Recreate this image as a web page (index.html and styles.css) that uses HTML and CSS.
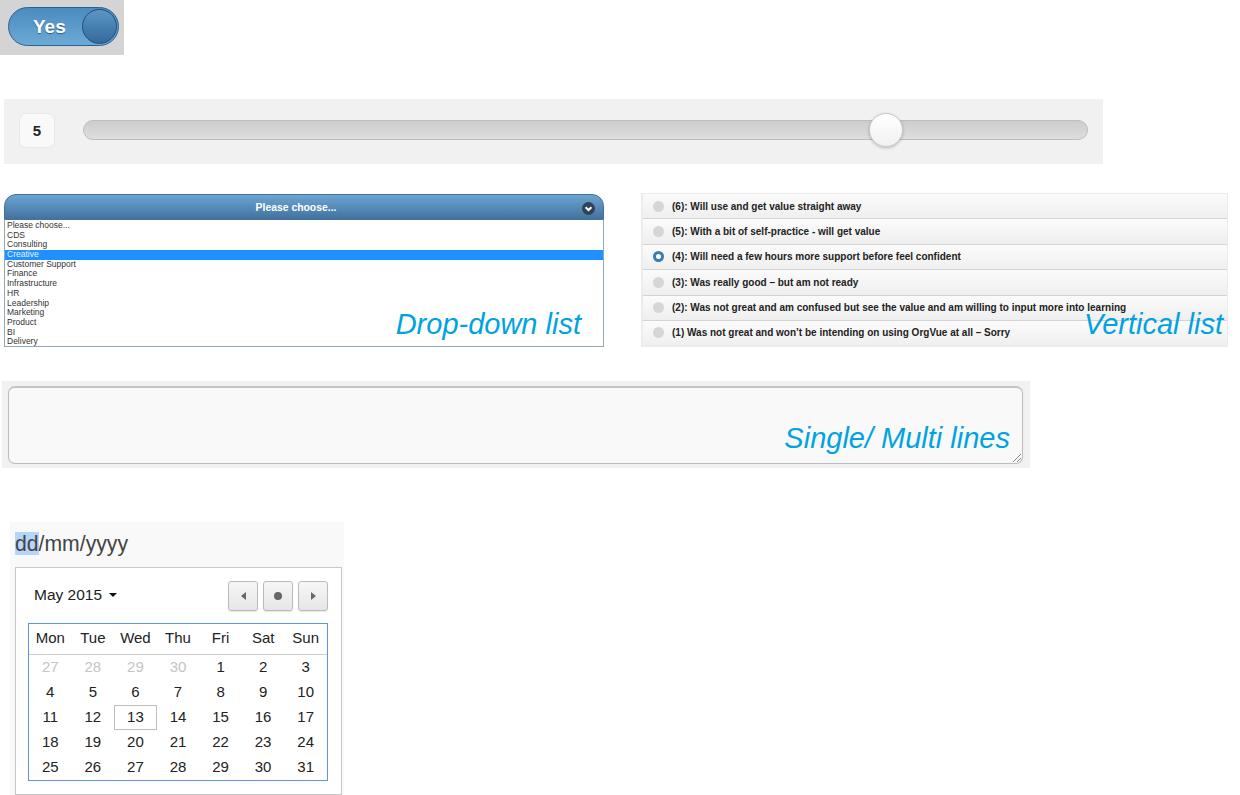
FILE: index.html
```html
<!DOCTYPE html>
<html lang="en">
<head>
    <meta charset="UTF-8">
    <meta name="viewport" content="width=device-width, initial-scale=1.0">
    <title>Question types</title>
    <link rel="stylesheet" href="styles.css">
</head>
<body>

<div class="toggle-panel">
    <div class="toggle">
        <span class="toggle-text">Yes</span>
        <span class="toggle-knob"></span>
    </div>
</div>

<div class="slider-panel">
    <div class="slider-value">5</div>
    <div class="slider-track">
        <span class="slider-thumb"></span>
    </div>
</div>

<div class="lists">
    <div class="dropdown">
        <div class="dropdown-head">
            <span>Please choose...</span>
            <svg class="dropdown-icon" width="13" height="13" viewBox="0 0 13 13">
                <circle cx="6.5" cy="6.5" r="6.5" fill="#2f4258"/>
                <path d="M3.6 5.2 L6.5 8 L9.4 5.2" fill="none" stroke="#fff" stroke-width="2"/>
            </svg>
        </div>
        <ul class="dropdown-items">
            <li>Please choose...</li>
            <li>CDS</li>
            <li>Consulting</li>
            <li class="selected">Creative</li>
            <li>Customer Support</li>
            <li>Finance</li>
            <li>Infrastructure</li>
            <li>HR</li>
            <li>Leadership</li>
            <li>Marketing</li>
            <li>Product</li>
            <li>BI</li>
            <li>Delivery</li>
        </ul>
        <span class="note note-dropdown">Drop-down list</span>
    </div>

    <div class="vlist">
        <div class="vlist-row"><span class="radio"></span>(6): Will use and get value straight away</div>
        <div class="vlist-row"><span class="radio"></span>(5): With a bit of self-practice - will get value</div>
        <div class="vlist-row"><span class="radio radio-on"></span>(4): Will need a few hours more support before feel confident</div>
        <div class="vlist-row"><span class="radio"></span>(3): Was really good – but am not ready</div>
        <div class="vlist-row"><span class="radio"></span>(2): Was not great and am confused but see the value and am willing to input more into learning</div>
        <div class="vlist-row"><span class="radio"></span>(1) Was not great and won’t be intending on using OrgVue at all – Sorry</div>
        <span class="note note-vlist">Vertical list</span>
    </div>
</div>

<div class="text-panel">
    <div class="text-box">
        <span class="note note-text">Single/ Multi lines</span>
        <svg class="resize-grip" width="10" height="10" viewBox="0 0 10 10">
            <path d="M1 9 L9 1 M5 9 L9 5" stroke="#888" stroke-width="1"/>
        </svg>
    </div>
</div>

<div class="date-block">
    <div class="date-input"><span class="date-mark">dd</span>/mm/yyyy</div>
    <div class="calendar">
        <div class="cal-top">
            <div class="cal-month">May 2015 <span class="caret"></span></div>
            <div class="cal-buttons">
                <button class="cal-btn" type="button"><span class="arrow-left"></span></button>
                <button class="cal-btn" type="button"><span class="dot"></span></button>
                <button class="cal-btn" type="button"><span class="arrow-right"></span></button>
            </div>
        </div>
        <div class="cal-box">
            <div class="cal-head">
                <span>Mon</span><span>Tue</span><span>Wed</span><span>Thu</span><span>Fri</span><span>Sat</span><span>Sun</span>
            </div>
            <div class="cal-days">
                <span class="muted">27</span><span class="muted">28</span><span class="muted">29</span><span class="muted">30</span><span>1</span><span>2</span><span>3</span>
                <span>4</span><span>5</span><span>6</span><span>7</span><span>8</span><span>9</span><span>10</span>
                <span>11</span><span>12</span><span class="today">13</span><span>14</span><span>15</span><span>16</span><span>17</span>
                <span>18</span><span>19</span><span>20</span><span>21</span><span>22</span><span>23</span><span>24</span>
                <span>25</span><span>26</span><span>27</span><span>28</span><span>29</span><span>30</span><span>31</span>
            </div>
        </div>
    </div>
</div>

</body>
</html>
```

FILE: styles.css
```css
html, body {
    margin: 0;
    padding: 0;
    height: 795px;
    overflow: hidden;
    background-color: #fff;
    font-family: "Liberation Sans", Arial, sans-serif;
}

/* toggle */
.toggle-panel {
    width: 124px;
    height: 55px;
    padding: 7px 0 0 8px;
    box-sizing: border-box;
    background-color: #d4d4d4;
}
.toggle {
    width: 111px;
    height: 39px;
    box-sizing: border-box;
    display: flex;
    align-items: center;
    justify-content: space-between;
    padding: 0 1px 0 24px;
    border: 1px solid #2a6190;
    border-radius: 20px;
    background: linear-gradient(#4a8cc0, #6caad6);
}
.toggle-text {
    color: #fff;
    font-size: 19px;
    font-weight: bold;
    text-shadow: 0 1px 1px #2f5f88;
}
.toggle-knob {
    width: 35px;
    height: 35px;
    box-sizing: border-box;
    border: 1px solid #234f78;
    border-radius: 50%;
    background: linear-gradient(#5a96c6, #34699c);
}

/* slider */
.slider-panel {
    width: 1099px;
    height: 65px;
    margin: 44px 0 0 4px;
    padding: 0 15px 3px;
    box-sizing: border-box;
    display: flex;
    align-items: center;
    gap: 28px;
    background-color: #f1f1f1;
}
.slider-value {
    width: 36px;
    height: 35px;
    box-sizing: border-box;
    border: 1px solid #e8e8e8;
    border-radius: 7px;
    background-color: #f9f9f9;
    color: #222;
    font-size: 15px;
    font-weight: bold;
    line-height: 33px;
    text-align: center;
}
.slider-track {
    position: relative;
    width: 1005px;
    height: 20px;
    box-sizing: border-box;
    border: 1px solid #bdbdbd;
    border-radius: 10px;
    background: linear-gradient(#cdcdcd, #dedede);
}
.slider-thumb {
    position: absolute;
    left: 785px;
    top: -8px;
    width: 34px;
    height: 34px;
    box-sizing: border-box;
    border: 1px solid #c8c8c8;
    border-radius: 50%;
    background: linear-gradient(#fff, #f1f1f1);
    box-shadow: 0 1px 3px rgba(0, 0, 0, 0.25);
}

/* drop-down and vertical list */
.lists {
    display: flex;
    align-items: flex-start;
    margin: 30px 0 0 4px;
    gap: 37px;
}
.note {
    position: absolute;
    color: #00a3e0;
    font-size: 29px;
    font-style: italic;
    line-height: 34px;
    white-space: nowrap;
}
.dropdown {
    position: relative;
    width: 600px;
    height: 153px;
}
.dropdown-head {
    position: relative;
    height: 26px;
    box-sizing: border-box;
    padding-right: 16px;
    border: 1px solid #47709a;
    border-radius: 12px 12px 0 0;
    background: linear-gradient(#6ba5d2, #42729f);
    color: #fff;
    font-size: 10.4px;
    font-weight: bold;
    line-height: 26px;
    text-align: center;
}
.dropdown-icon {
    position: absolute;
    right: 8px;
    top: 7px;
}
.dropdown-items {
    list-style: none;
    margin: 0;
    padding: 1px 0 0;
    height: 127px;
    box-sizing: border-box;
    border: 1px solid #8fa8c4;
    border-top: none;
    overflow: hidden;
    background-color: #fff;
    color: #333;
    font-size: 8.5px;
    line-height: 9.7px;
}
.dropdown-items li {
    height: 9.7px;
    padding-left: 2px;
}
.dropdown-items .selected {
    background-color: #1e90ff;
    color: #e6f2ff;
}
.note-dropdown {
    right: 23px;
    bottom: 6px;
}
.vlist {
    position: relative;
    width: 587px;
    height: 154px;
    margin-top: -1px;
    box-sizing: border-box;
    border: 2px solid #ececec;
    border-top-width: 1px;
    border-right-width: 1px;
}
.vlist-row {
    display: flex;
    align-items: center;
    height: 25.4px;
    box-sizing: border-box;
    padding-left: 10px;
    border-bottom: 1px solid #d4d4d4;
    background: linear-gradient(#fbfbfb, #efefef);
    color: #222;
    font-size: 10px;
    font-weight: bold;
    white-space: nowrap;
}
.vlist-row:last-of-type {
    height: 24px;
    border-bottom: none;
}
.radio {
    width: 11px;
    height: 11px;
    margin-right: 8px;
    flex: none;
    border-radius: 50%;
    background-color: #d6d6d6;
}
.radio-on {
    box-sizing: border-box;
    border: 3px solid #3a7cb4;
    background-color: #fff;
}
.note-vlist {
    right: 4px;
    bottom: 4px;
}

/* text box */
.text-panel {
    width: 1028px;
    height: 87px;
    margin: 34px 0 0 2px;
    padding: 5px 0 0 6px;
    box-sizing: border-box;
    background-color: #f1f1f1;
}
.text-box {
    position: relative;
    width: 1015px;
    height: 78px;
    box-sizing: border-box;
    border: 1px solid #bcbcbc;
    border-top: 2px solid #c4c4c4;
    border-radius: 7px;
    background-color: #f9f9f9;
}
.note-text {
    right: 12px;
    bottom: 8px;
}
.resize-grip {
    position: absolute;
    right: 0;
    bottom: 0;
}

/* date picker */
.date-block {
    width: 334px;
    margin: 54px 0 0 10px;
}
.date-input {
    height: 45px;
    box-sizing: border-box;
    padding: 9px 0 0 5px;
    background-color: #f9f9f9;
    color: #444;
    font-size: 21.2px;
    line-height: 26px;
}
.date-mark {
    background-color: #b5d5fb;
}
.calendar {
    width: 327px;
    height: 228px;
    margin-left: 5px;
    padding: 0 13px 0 12px;
    box-sizing: border-box;
    border: 1px solid #c8c8c8;
    background-color: #fff;
    box-shadow: -5px 0 0 #f9f9f9, 2px 0 0 #f9f9f9;
    color: #222;
    font-size: 15px;
}
.cal-top {
    display: flex;
    align-items: center;
    justify-content: space-between;
    height: 55px;
}
.cal-month {
    margin: 0 0 2px 6px;
    font-size: 15.5px;
}
.caret {
    display: inline-block;
    margin-left: 3px;
    vertical-align: middle;
    border-top: 4px solid #111;
    border-left: 4px solid transparent;
    border-right: 4px solid transparent;
}
.cal-buttons {
    display: flex;
    gap: 5px;
}
.cal-btn {
    display: flex;
    align-items: center;
    justify-content: center;
    width: 30px;
    height: 30px;
    padding: 0;
    border: 1px solid #bbb;
    border-radius: 3px;
    background: linear-gradient(#f6f6f6, #e6e6e6);
    box-shadow: 0 1px 1px rgba(0, 0, 0, 0.1);
}
.arrow-left {
    border-right: 5px solid #666;
    border-top: 4px solid transparent;
    border-bottom: 4px solid transparent;
}
.arrow-right {
    border-left: 5px solid #666;
    border-top: 4px solid transparent;
    border-bottom: 4px solid transparent;
}
.dot {
    width: 8px;
    height: 8px;
    border-radius: 50%;
    background-color: #666;
}
.cal-box {
    width: 300px;
    height: 158px;
    box-sizing: border-box;
    border: 1px solid #5b94e8;
}
.cal-head,
.cal-days {
    display: grid;
    grid-template-columns: repeat(7, 1fr);
    text-align: center;
}
.cal-head {
    height: 31px;
    box-sizing: border-box;
    border-bottom: 1px solid #ccc;
    line-height: 27px;
}
.cal-days {
    grid-auto-rows: 25px;
    line-height: 23px;
}
.muted {
    color: #c4c4c4;
}
.today {
    box-sizing: border-box;
    border: 1px solid #bdbdbd;
    line-height: 21px;
}
```
